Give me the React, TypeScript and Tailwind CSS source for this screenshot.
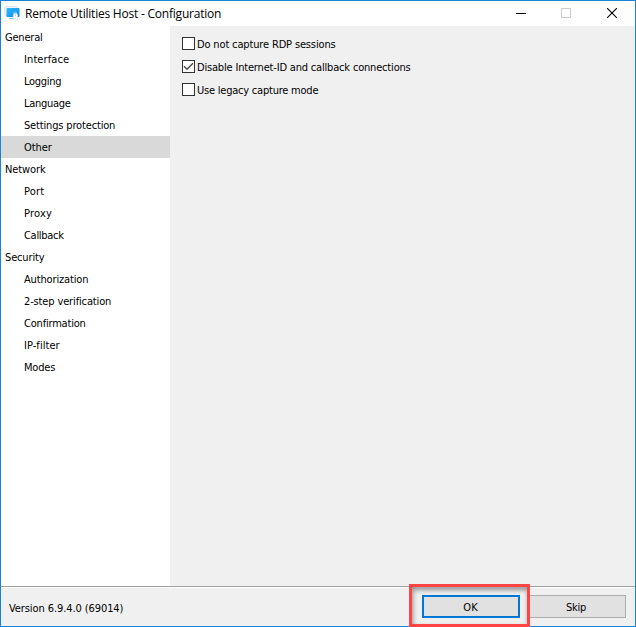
type Item = { label: string; tracking: string; group?: boolean; selected?: boolean };

const items: Item[] = [
  { label: "General", tracking: "tracking-[-0.2px]", group: true },
  { label: "Interface", tracking: "tracking-[0.1px]" },
  { label: "Logging", tracking: "tracking-[-0.3px]" },
  { label: "Language", tracking: "tracking-[-0.3px]" },
  { label: "Settings protection", tracking: "tracking-[-0.16px]" },
  { label: "Other", tracking: "tracking-[-0.1px]", selected: true },
  { label: "Network", tracking: "tracking-[-0.1px]", group: true },
  { label: "Port", tracking: "tracking-[0.15px]" },
  { label: "Proxy", tracking: "tracking-[0.2px]" },
  { label: "Callback", tracking: "tracking-[-0.3px]" },
  { label: "Security", tracking: "tracking-[-0.15px]", group: true },
  { label: "Authorization", tracking: "tracking-[-0.15px]" },
  { label: "2-step verification", tracking: "tracking-[-0.14px]" },
  { label: "Confirmation", tracking: "tracking-[-0.2px]" },
  { label: "IP-filter", tracking: "tracking-[0.05px]" },
  { label: "Modes", tracking: "tracking-[-0.2px]" },
];

const options = [
  { label: "Do not capture RDP sessions", checked: false, tracking: "tracking-[-0.15px]" },
  { label: "Disable Internet-ID and callback connections", checked: true, tracking: "tracking-[-0.18px]" },
  { label: "Use legacy capture mode", checked: false, tracking: "tracking-[-0.22px]" },
];

function AppIcon() {
  return (
    <svg width="16" height="16" viewBox="0 0 16 16" className="-ml-px">
      <defs>
        <linearGradient id="screen" x1="0" y1="0" x2="1" y2="1">
          <stop offset="0" stopColor="#2fbcfb" />
          <stop offset="1" stopColor="#0c84e4" />
        </linearGradient>
      </defs>
      <rect x=".5" y=".5" width="13" height="9" rx="1" fill="#f1f5f8" stroke="#dce5eb" />
      <rect x="2.5" y="2" width="13" height="9" rx=".7" fill="url(#screen)" />
      <path d="M5.5 12h4v1h-4z" fill="#6cc3f4" />
      <path d="M9.2 8q.2-2 2-2 1.4 0 1.8 1" fill="none" stroke="#a6ddfb" strokeWidth=".7" />
      <rect x="9.3" y="7.2" width="4.4" height="7.4" rx="2.2" fill="#fff" stroke="#bdd3e2" strokeWidth=".6" />
      <path d="M11.5 8.3v2" stroke="#9fc4dc" strokeWidth=".8" />
    </svg>
  );
}

function CheckBox({ checked }: { checked: boolean }) {
  return (
    <span className="h-[13px] w-[13px] shrink-0 border border-[#333] bg-white">
      {checked && (
        <svg width="11" height="11" viewBox="0 0 11 11" className="block">
          <path d="M1 5.3l3 3L10 2.3" fill="none" stroke="#444" strokeWidth="1.3" />
        </svg>
      )}
    </span>
  );
}

export default function App() {
  return (
    <div className="flex h-[627px] w-[636px] flex-col border border-[#1883d7] bg-[#f0f0f0] font-['DejaVu_Sans_Condensed','DejaVu_Sans',sans-serif] text-[11px] text-black">
      <header className="flex h-[25px] shrink-0 bg-white">
        <div className="flex flex-1 items-center pl-1">
          <AppIcon />
          <h1 className="ml-[5px] whitespace-nowrap font-['Open_Sans',sans-serif] text-[12px] leading-4 tracking-[-0.22px]">Remote Utilities Host - Configuration</h1>
        </div>
        <div className="flex gap-[35px] pr-[17px] pt-[7px]">
          <svg width="10" height="10"><path d="M0 5.5h10" stroke="#000" /></svg>
          <svg width="10" height="10"><path d="M.5.5h9v9h-9z" fill="none" stroke="#ccc" /></svg>
          <svg width="10" height="10" className="ml-px mr-px"><path d="M0 0l10 10m0-10L0 10" stroke="#000" strokeWidth="1.1" /></svg>
        </div>
      </header>
      <main className="flex h-[560px] shrink-0">
        <nav className="w-[169px] bg-white">
          {items.map((item) => (
            <div key={item.label} className={`flex h-[22px] items-center whitespace-nowrap pt-[2px] ${item.group ? "pl-1" : "pl-[23px]"} ${item.selected ? "bg-[#d9d9d9]" : ""}`}>
              <span className={item.tracking}>{item.label}</span>
            </div>
          ))}
        </nav>
        <section className="flex flex-col gap-[10px] pl-3 pt-[11px]">
          {options.map((option) => (
            <label key={option.label} className="flex h-[13px] items-center gap-[2px] whitespace-nowrap">
              <CheckBox checked={option.checked} />
              <span className={`pt-1 ${option.tracking}`}>{option.label}</span>
            </label>
          ))}
        </section>
      </main>
      <footer className="relative flex h-[39px] shrink-0 justify-between border-t border-[#a0a0a0] pl-2 pr-[9px] shadow-[inset_0_1px_0_#fff]">
        <span className="pt-[15px] leading-[14px] tracking-[-0.09px]">Version 6.9.4.0 (69014)</span>
        <div className="flex gap-[8px] pt-2">
          <button className="h-[23px] w-[98px] border-2 border-[#0078d7] bg-[#e1e1e1] pr-px pt-[2px] leading-[17px]">OK</button>
          <button className="h-[23px] w-[98px] border border-[#adadad] bg-[#e1e1e1] pr-[2px] pt-[2px] leading-[19px] tracking-[-0.3px]">Skip</button>
        </div>
        <div className="pointer-events-none absolute -top-[3px] left-[408px] h-[43px] w-[121px] border-[3px] border-[#ff4444] shadow-[inset_1px_3px_5px_#0006]" />
      </footer>
    </div>
  );
}
